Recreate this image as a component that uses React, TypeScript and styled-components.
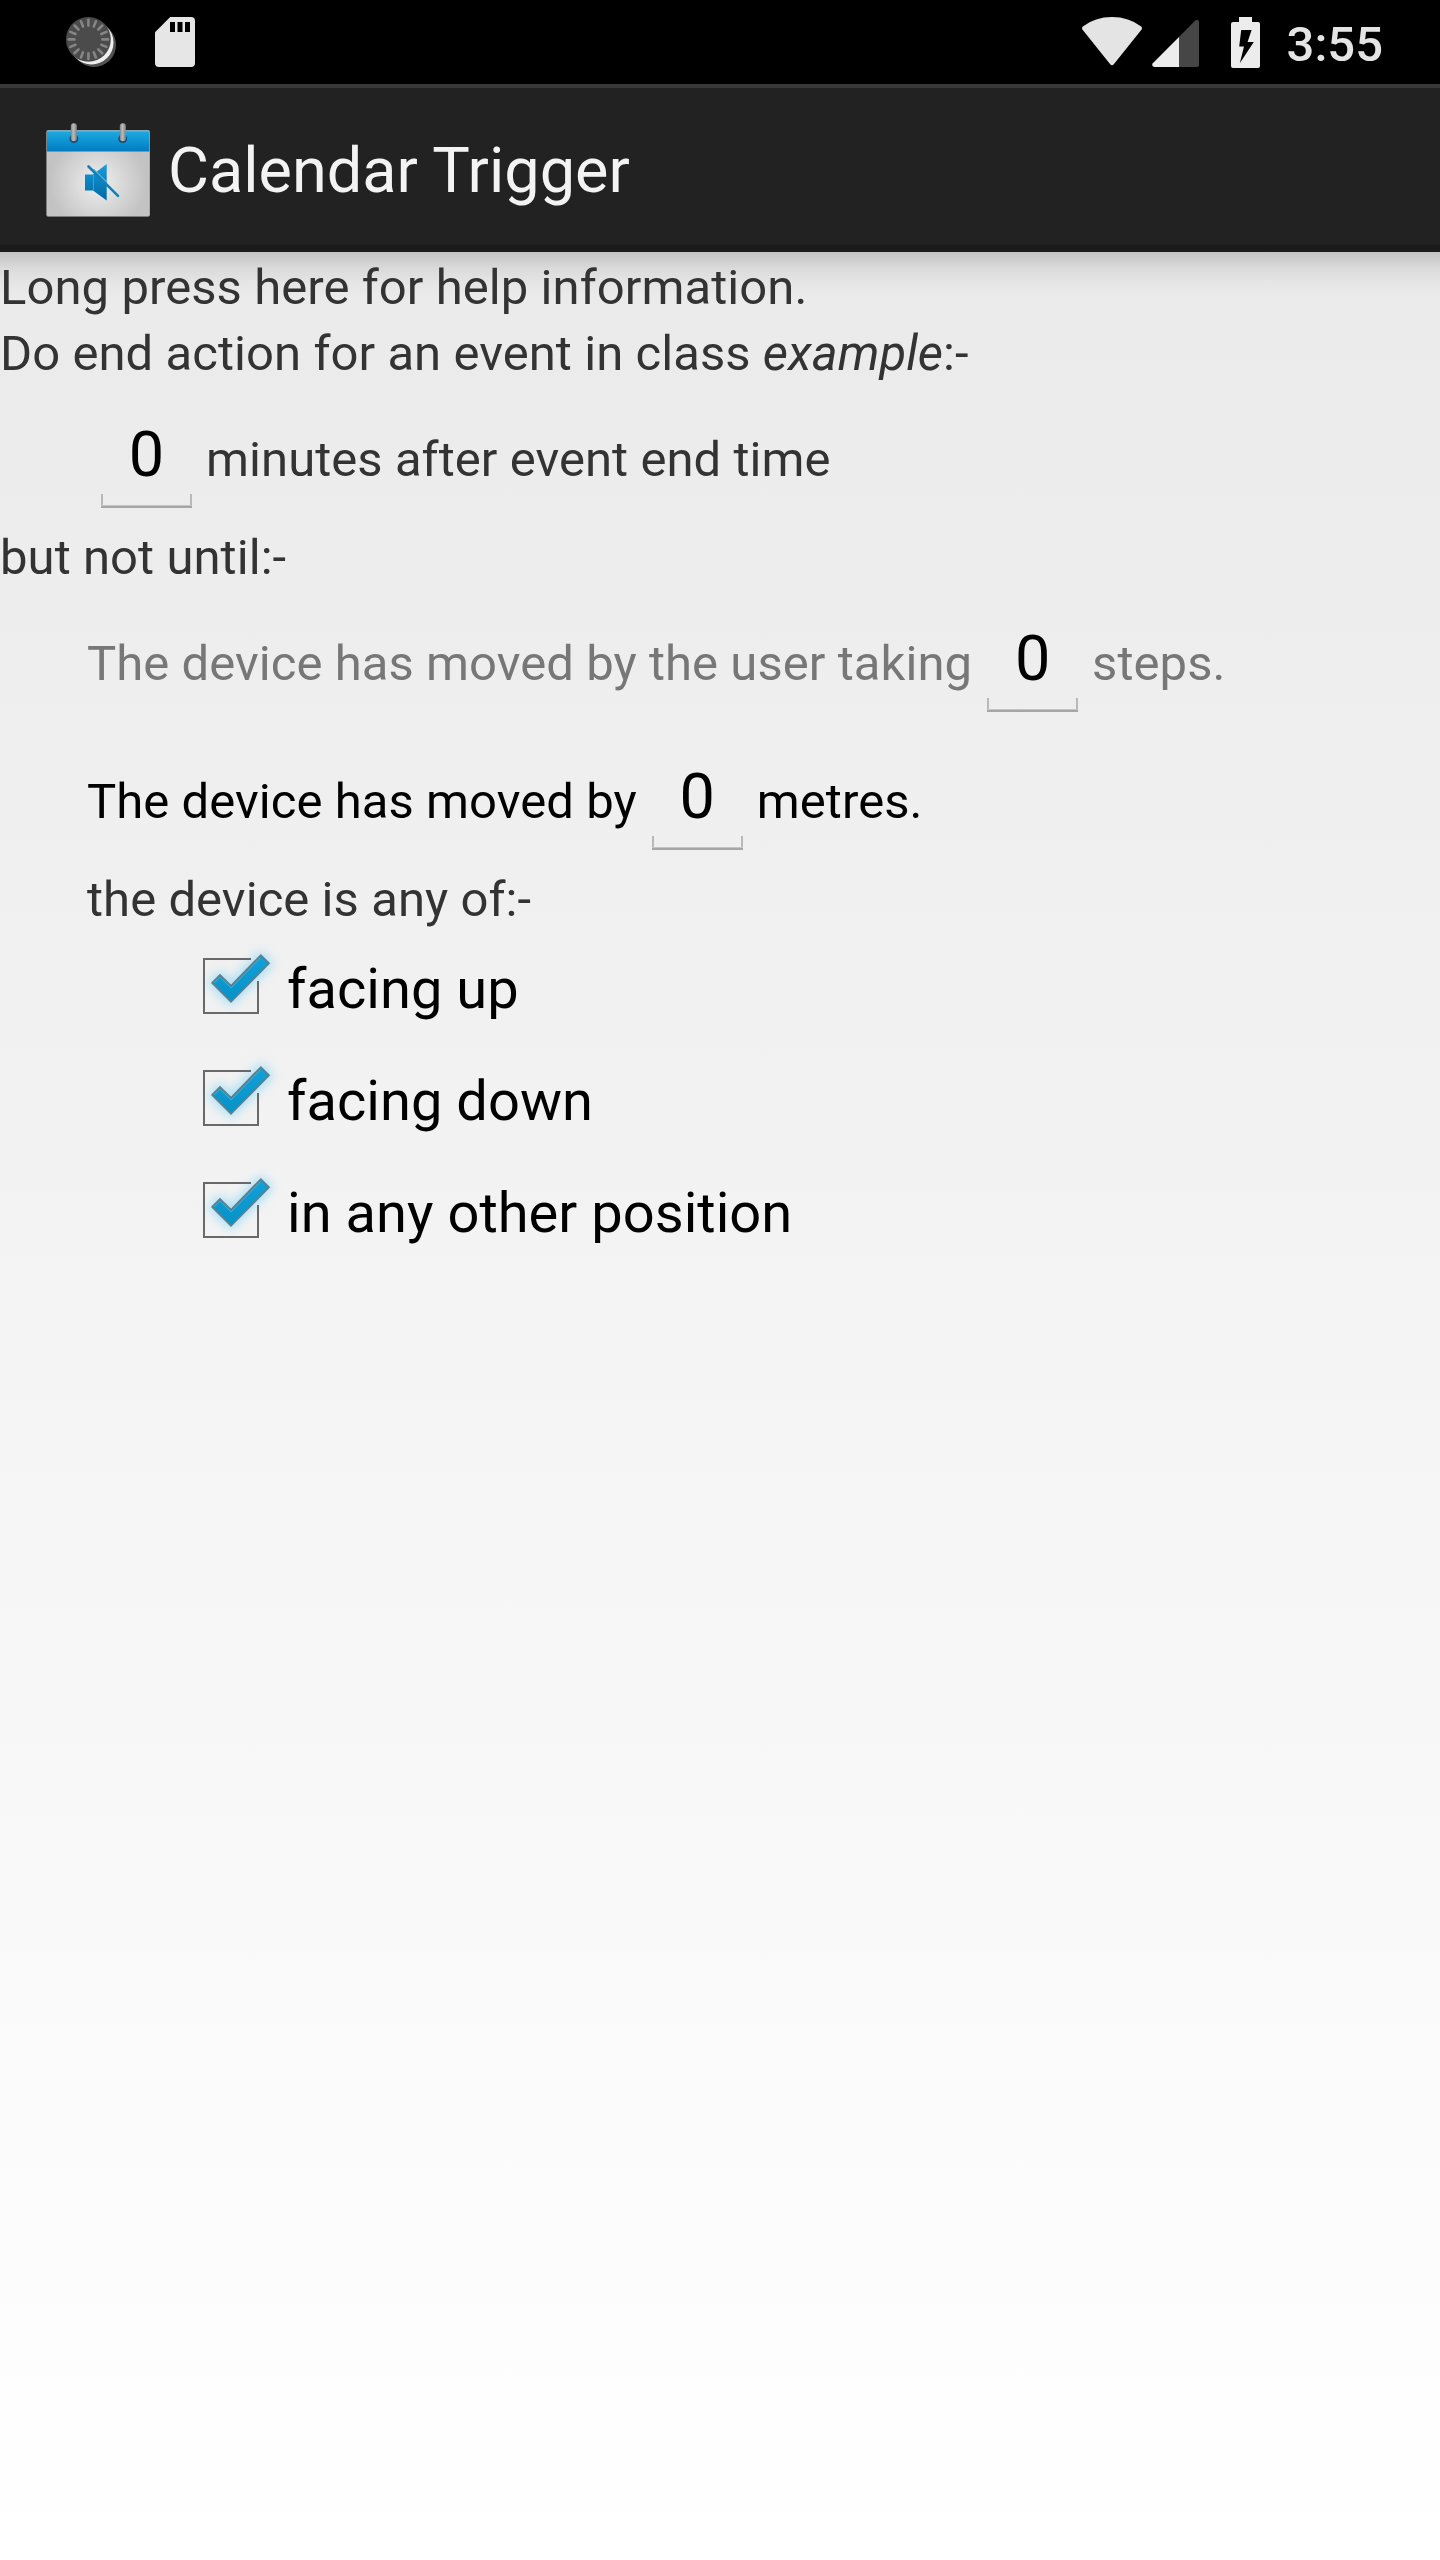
import React, { useState } from "react";
import styled, { createGlobalStyle } from "styled-components";

const GlobalStyle = createGlobalStyle`
  body { margin: 0; background: #fff; }
`;

const Screen = styled.div`
  display: flex;
  flex-direction: column;
  width: 1440px;
  height: 2560px;
  overflow: hidden;
  background: linear-gradient(#e8e8e8, #ffffff);
  font-family: Roboto, "Noto Sans", sans-serif;
`;

const StatusBar = styled.header`
  display: flex;
  align-items: center;
  justify-content: space-between;
  box-sizing: border-box;
  height: 84px;
  flex: none;
  padding: 0 56px 0 66px;
  background: #000;
`;

const StatusGroup = styled.div<{ $gap: number }>`
  display: flex;
  align-items: center;
  gap: ${(p) => p.$gap}px;
  height: 84px;

  svg { display: block; flex: none; }
`;

const Clock = styled.span`
  margin: 0 1px 0 -5px;
  padding-top: 5px;
  color: #e4e4e4;
  font-size: 49px;
  font-weight: 500;
  line-height: 84px;
`;

const ActionBar = styled.div`
  display: flex;
  align-items: center;
  box-sizing: border-box;
  height: 168px;
  flex: none;
  padding: 7px 0 0 42px;
  border-top: 4px solid #383838;
  border-bottom: 7px solid #1b1b1b;
  background: #222;
`;

const Title = styled.h1`
  margin: 0 0 0 14px;
  padding-top: 1px;
  color: #f3f3f3;
  font-size: 63px;
  font-weight: 400;
  line-height: 84px;
`;

const Content = styled.main`
  flex: 1;
  padding-top: 2px;
  background: linear-gradient(rgba(0, 0, 0, 0.17), rgba(0, 0, 0, 0.07) 16px, rgba(0, 0, 0, 0.02) 32px, transparent 46px);
`;

const Line = styled.p<{ $indent?: number }>`
  margin: 0;
  padding: 2px 0 0 ${(p) => p.$indent ?? 0}px;
  color: #333;
  font-size: 49px;
  letter-spacing: 0.065px;
  line-height: 64px;
  white-space: pre;
`;

const FieldRow = styled.label<{ $indent: number; $color: string }>`
  display: flex;
  align-items: baseline;
  box-sizing: border-box;
  height: 138px;
  padding: 22px 0 0 ${(p) => p.$indent}px;
  color: ${(p) => p.$color};
  font-size: 49px;
  letter-spacing: 0.06px;
  line-height: 66px;
  white-space: pre;
`;

const NumberField = styled.input`
  box-sizing: border-box;
  width: 91px;
  height: 100px;
  margin: 0 14px 0 15px;
  padding: 0 0 7px;
  border: 0;
  outline: 0;
  border-radius: 0;
  background:
    linear-gradient(#c4c4c4 0 1px, #a6a6a6 1px) left bottom / 100% 3px no-repeat,
    linear-gradient(#b9b9b9, #b9b9b9) left bottom / 2px 14px no-repeat,
    linear-gradient(#b9b9b9, #b9b9b9) right bottom / 2px 14px no-repeat;
  color: #000;
  font: 400 63px/84px Roboto, "Noto Sans", sans-serif;
  text-align: center;
`;

const OptionList = styled.div`
  display: flex;
  flex-direction: column;
  padding: 1px 0 0 189px;
`;

const Option = styled.label`
  display: flex;
  align-items: center;
  height: 112px;
  color: #000;
  font-size: 56px;
  letter-spacing: 0.03px;
  line-height: 112px;

  input { appearance: none; width: 0; height: 0; margin: 0; }
  svg { display: block; flex: none; overflow: visible; }
`;

const SyncIcon = () => (
  <svg width="50" height="50" viewBox="0 0 50 50">
    <circle cx="28" cy="28" r="22" fill="#525252" />
    <circle cx="25.5" cy="25.5" r="22" fill="#eee" />
    <circle cx="22.4" cy="22.4" r="22.4" fill="#4b4b4b" />
    {Array.from({ length: 16 }, (_, i) => (
      <path
        key={i}
        d="M22.4 2.8V8.4"
        stroke="#858585"
        strokeWidth="2.6"
        strokeLinecap="round"
        transform={`rotate(${i * 22.5} 22.4 22.4)`}
      />
    ))}
  </svg>
);

const SdCardIcon = () => (
  <svg width="40" height="50" viewBox="0 0 40 50">
    <path fill="#e6e6e6" d="M15.2 0H36Q40 0 40 4V46Q40 50 36 50H4Q0 50 0 46V15.2Z" />
    <path fill="#000" d="M15 5h5v10h-5zM22.5 5h5v10h-5zM30 5h5v10h-5z" />
  </svg>
);

const WifiIcon = () => (
  <svg width="60" height="50" viewBox="0 0 60 50">
    <path fill="#e4e4e4" d="M0.8 9.5Q13 0 30 0T59.2 9.5Q60.7 11 59.2 13L32 47Q30 49.6 28 47L0.8 13Q-.7 11 .8 9.5Z" />
  </svg>
);

const SignalIcon = () => (
  <svg width="47" height="50" viewBox="0 0 47 50">
    <path fill="#464646" d="M27 20 43.3 3.6Q46 1.6 47 5V47.5Q47 50 44.5 50H27Z" />
    <path fill="#ececec" d="M27 20V50H2.5Q-1 49 .8 46.2Z" />
  </svg>
);

const BatteryIcon = () => (
  <svg width="29" height="51" viewBox="0 0 29 51">
    <path fill="#ececec" d="M8 0h13v5h6q2 0 2 2v42q0 2-2 2H2q-2 0-2-2V7q0-2 2-2h6z" />
    <path fill="#000" d="M10.2 13H20.6L16.6 25H22.8L8.8 46.2 13 29.6H8.2Z" />
  </svg>
);

const CalendarIcon = () => (
  <svg width="112" height="112" viewBox="0 0 112 112">
    <defs>
      <radialGradient id="page" gradientUnits="userSpaceOnUse" cx="56" cy="69" r="48">
        <stop offset="0" stopColor="#eeeeee" />
        <stop offset="0.3" stopColor="#e2e2e2" />
        <stop offset="1" stopColor="#c3c3c3" />
      </radialGradient>
      <linearGradient id="band" x1="0" y1="0" x2="0" y2="1">
        <stop offset="0" stopColor="#1cabe3" />
        <stop offset="1" stopColor="#017bc2" />
      </linearGradient>
      <linearGradient id="horn" gradientUnits="userSpaceOnUse" x1="0" y1="50" x2="0" y2="86">
        <stop offset="0" stopColor="#159dd8" />
        <stop offset="1" stopColor="#0068a8" />
      </linearGradient>
      <linearGradient id="ring" x1="0" y1="0" x2="1" y2="0">
        <stop offset="0" stopColor="#7d7d7d" />
        <stop offset="0.4" stopColor="#bdbdbd" />
        <stop offset="1" stopColor="#858585" />
      </linearGradient>
    </defs>
    <rect x="4.2" y="16" width="103.8" height="86.7" rx="2" fill="#999" />
    <rect x="5" y="17" width="102.4" height="85" rx="1.5" fill="url(#page)" />
    <path d="M5 37.5V18q0-1 1-1H106.4q1 0 1 1V37.5Z" fill="url(#band)" />
    <path d="M5.5 17H107" stroke="#66bde0" strokeWidth="1" />
    <circle cx="31.9" cy="24.6" r="4.4" fill="#174d6c" />
    <circle cx="80.7" cy="24.6" r="4.4" fill="#174d6c" />
    <rect x="28.8" y="9.3" width="6" height="18" rx="3" fill="url(#ring)" />
    <rect x="77.8" y="9.3" width="6" height="18" rx="3" fill="url(#ring)" />
    <path d="M43 60.5H51L64.7 50V86.5L51 76.5H43Z" fill="url(#horn)" />
    <path d="M51.5 61V76.5" stroke="#3c9fcf" strokeWidth="1" />
    <path d="M51.5 55.2 64.7 68.3" stroke="#69b8dd" strokeWidth="1.6" />
    <path d="M46.5 52.5 76 81.8" stroke="#1180bb" strokeWidth="2.6" strokeLinecap="round" />
  </svg>
);

const TICK = "M23.2 50 31 42 42 52.8 71.8 22.2 80 30.2 42 68.8Z";

const CheckIcon = ({ checked }: { checked: boolean }) => (
  <svg width="98" height="112" viewBox="0 0 98 112">
    <defs>
      <filter id="glow" x="-50%" y="-50%" width="200%" height="200%">
        <feGaussianBlur stdDeviation="5.5" />
      </filter>
      <linearGradient id="tick" x1="0" y1="0" x2="0" y2="1">
        <stop offset="0" stopColor="#12a0d6" />
        <stop offset="1" stopColor="#0492c9" />
      </linearGradient>
    </defs>
    {checked ? (
      <>
        <path d={TICK} fill="#7fd6f7" stroke="#7fd6f7" strokeWidth="6" opacity="0.7" filter="url(#glow)" />
        <path d="M62 26H15V80H69V48" fill="none" stroke="#696969" strokeWidth="2" />
        <path d={TICK} fill="url(#tick)" stroke="#5f7f8e" strokeWidth="1.8" />
        <path d="M25.5 49.8 31 44.2 42 55 71.800 24.500" fill="none" stroke="#3bb3e0" strokeWidth="1" />
      </>
    ) : (
      <rect x="15" y="26" width="54" height="54" fill="none" stroke="#696969" strokeWidth="2" />
    )}
  </svg>
);

const NumericInput = () => {
  const [value, setValue] = useState("0");
  return <NumberField value={value} onChange={(e) => setValue(e.target.value)} />;
};

const CheckOption = ({ label }: { label: string }) => {
  const [checked, setChecked] = useState(true);
  return (
    <Option>
      <input type="checkbox" checked={checked} onChange={() => setChecked(!checked)} />
      <CheckIcon checked={checked} />
      {label}
    </Option>
  );
};

export default function App() {
  return (
    <>
      <GlobalStyle />
      <Screen>
        <StatusBar>
          <StatusGroup $gap={39}>
            <SyncIcon />
            <SdCardIcon />
          </StatusGroup>
          <StatusGroup $gap={32}>
            <StatusGroup $gap={10}>
              <WifiIcon />
              <SignalIcon />
            </StatusGroup>
            <BatteryIcon />
            <Clock>3:55</Clock>
          </StatusGroup>
        </StatusBar>
        <ActionBar>
          <CalendarIcon />
          <Title>Calendar Trigger</Title>
        </ActionBar>
        <Content>
          <Line>Long press here for help information.</Line>
          <Line>
            Do end action for an event in class <em>example</em>:-
          </Line>
          <FieldRow $indent={86} $color="#333">
            <NumericInput />
            minutes after event end time
          </FieldRow>
          <Line>but not until:-</Line>
          <FieldRow $indent={87} $color="#777">
            The device has moved by the user taking
            <NumericInput />
            steps.
          </FieldRow>
          <FieldRow $indent={87} $color="#000">
            The device has moved by
            <NumericInput />
            metres.
          </FieldRow>
          <Line $indent={87}>the device is any of:-</Line>
          <OptionList>
            <CheckOption label="facing up" />
            <CheckOption label="facing down" />
            <CheckOption label="in any other position" />
          </OptionList>
        </Content>
      </Screen>
    </>
  );
}
